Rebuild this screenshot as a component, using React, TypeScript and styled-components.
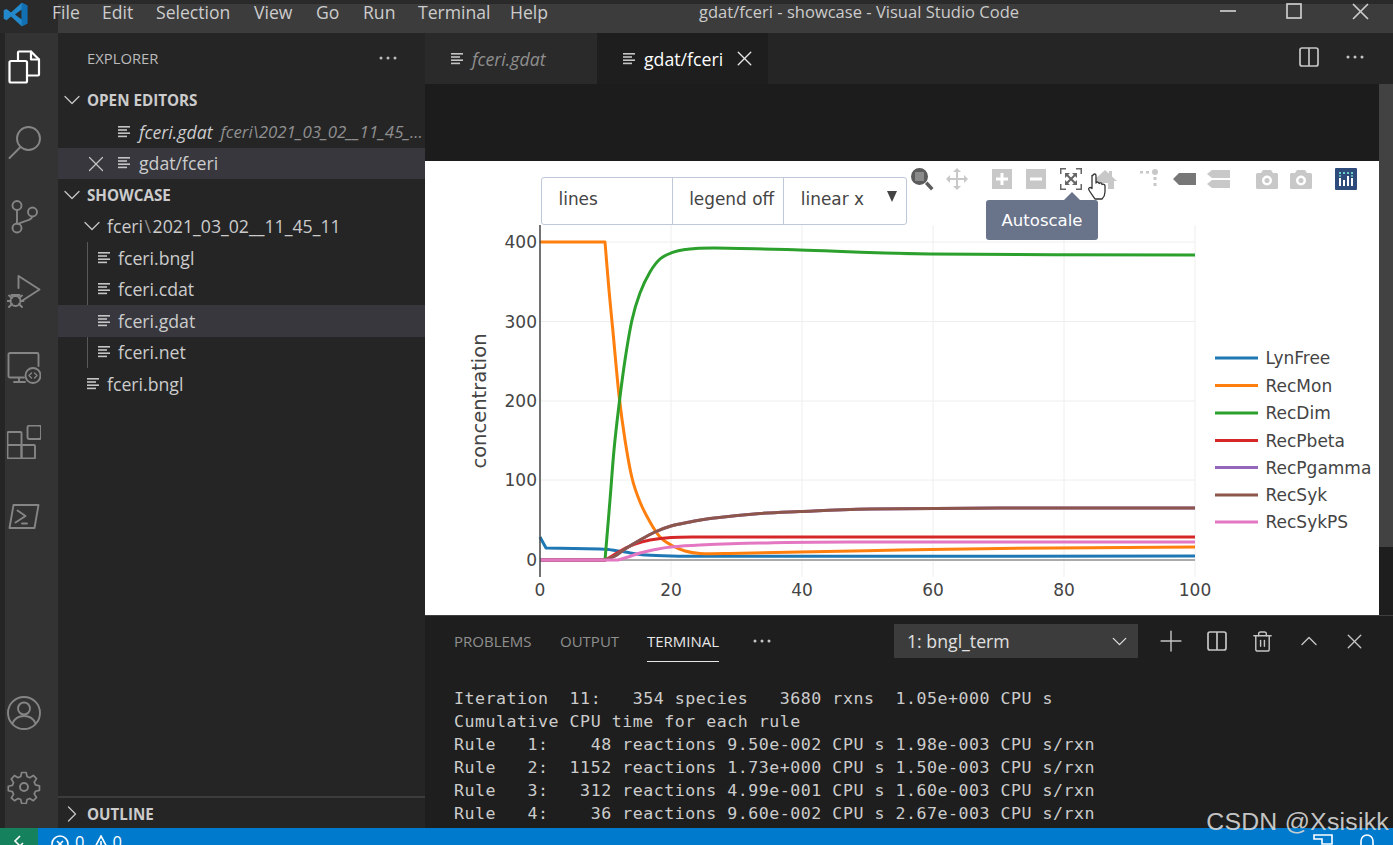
import React from 'react';
import styled, { createGlobalStyle } from 'styled-components';
import { ChevronDown, ChevronRight, ChevronUp, Plus, X, Trash2 } from 'lucide-react';

const UI = '"Open Sans", "Noto Sans", sans-serif';
const CHART = '"DejaVu Sans", sans-serif';

const Global = createGlobalStyle`
  html, body { margin: 0; padding: 0; height: 100%; overflow: hidden; background: #1e1e1e; }
  #root { height: 100%; }
  * { box-sizing: border-box; }
`;

const Page = styled.div`
  position: relative; width: 1393px; height: 845px; display: grid; grid-template-rows: 33px 1fr 17px;
  font-family: ${UI}; color: #cccccc; overflow: hidden;
`;
const TitleBar = styled.header`
  position: relative; display: flex; align-items: center; background: #3c3c3c;
  border-top: 4px solid #2a2a2a; padding-left: 52px; font-size: 17.6px; color: #cccccc;
`;
const Logo = styled.svg`position: absolute; left: 2px; top: -3px; width: 27px; height: 27px;`;
const LogoCell = styled.div`position: absolute; left: 0; top: -4px; width: 58px; height: 33px; background: #2a2a2a;`;
const MenuItem = styled.span<{ $w: number }>`position: relative; width: ${p => p.$w}px; white-space: nowrap; margin-top: -13px;`;
const WindowTitle = styled.span`position: absolute; left: 699px; top: -4px; white-space: nowrap; font-size: 16.5px; letter-spacing: 0.02px;`;
const WindowButtons = styled.div`position: absolute; right: 0; top: -4px; display: flex; width: 198px; height: 33px;`;
const WindowButton = styled.div`width: 66px; height: 22px; display: flex; align-items: center; justify-content: center; svg { display: block; }`;

const Main = styled.div`display: flex; min-height: 0;`;
const ActivityBar = styled.nav`
  width: 58px; background: #333333; border-left: 5px solid #252526; display: flex; flex-direction: column;
  align-items: flex-start; padding: 17px 0 24px 1.5px;
`;
const ActivityGroup = styled.div<{ $gap: number }>`display: flex; flex-direction: column; gap: ${p => p.$gap}px;`;
const Spacer = styled.div`flex: 1;`;
const ActivityIcon = styled.svg<{ $active?: boolean }>`
  display: block; width: 34px; height: 34px; fill: none; stroke: ${p => (p.$active ? '#ffffff' : '#858585')};
  stroke-width: ${p => (p.$active ? 2.2 : 1.9)}; stroke-linecap: round; stroke-linejoin: round;
`;

const Sidebar = styled.aside`width: 367px; background: #252526; display: flex; flex-direction: column;`;
const SideHead = styled.div`
  height: 51.5px; flex: none; display: flex; align-items: center; justify-content: space-between;
  padding: 0 27px 2px 29px; font-size: 14.8px; color: #bbbbbb;
`;
const Dots = styled.svg`display: block; width: 20px; height: 6px; fill: currentColor;`;
const Row = styled.div<{ $pad: number; $bg?: string }>`
  position: relative; height: 31.5px; display: flex; align-items: center; white-space: nowrap; overflow: hidden;
  padding-left: ${p => p.$pad}px; background: ${p => p.$bg || 'transparent'}; font-size: 17.7px;
`;
const SectionRow = styled(Row)`font-weight: 700; font-size: 15.2px; color: #cccccc;`;
const Chevron = styled.span<{ $w: number }>`display: flex; width: ${p => p.$w}px; flex: none; color: #c5c5c5; svg { display: block; margin-left: -7px; flex: none; }`;
const RowClose = styled.span`position: absolute; left: 24.5px; top: 3px; color: #c5c5c5; display: flex;`;
const FileGlyph = styled.svg<{ $mr: number }>`display: block; width: 14px; height: 14px; flex: none; margin-right: ${p => p.$mr}px; fill: #c5c5c5;`;
const Italic = styled.span`font-style: italic;`;
const Hint = styled.span`font-style: italic; color: #8f8f8f; font-size: 16.9px; margin-left: 8px;`;
const Thin = styled.span`color: #8f8f8f; margin: 0 1.5px;`;
const Guided = styled.div`
  position: relative;
  &::before { content: ''; position: absolute; left: 29px; top: 0; bottom: 0; width: 1px; background: #585858; }
`;
const SideFill = styled.div`flex: 1;`;
const OutlineRow = styled(SectionRow)`border-top: 2px solid #3c3c3c; height: 33px; margin-bottom: -1px;`;

const Workbench = styled.div`flex: 1; min-width: 0; display: flex; flex-direction: column;`;
const TabBar = styled.div`height: 51px; flex: none; background: #252526; display: flex; position: relative;`;
const Tab = styled.div<{ $active?: boolean; $w: number }>`
  width: ${p => p.$w}px; display: flex; align-items: center; padding-left: 25px; font-size: 17.7px;
  background: ${p => (p.$active ? '#1e1e1e' : '#2a2a2a')};
  color: ${p => (p.$active ? '#ffffff' : '#8f8f8f')};
`;
const TabActions = styled.div`position: absolute; right: 28px; top: 14px; display: flex; align-items: center; gap: 26px; color: #c5c5c5;`;
const TabClose = styled.span`display: flex; margin-left: 9px; color: #e6e6e6;`;
const LineIcon = styled.svg`display: block; fill: none; stroke: currentColor; stroke-width: 1.7;`;

const EditorRow = styled.div`flex: 1; min-height: 0; display: flex; background: #1e1e1e;`;
const EditorColumn = styled.div`flex: 1; min-width: 0; display: flex; flex-direction: column;`;
const EditorGap = styled.div`height: 77px; flex: none; background: #1c1c1c;`;
const Webview = styled.div`position: relative; flex: 1; background: #ffffff; min-height: 0;`;
const Scrollbar = styled.div`width: 14px; flex: none; background: #1e1e1e;`;
const ScrollThumb = styled.div`height: 463px; background: #424242;`;
const ChartSvg = styled.svg`display: block; width: 954px; height: 454px;`;
const AxisText = styled.text`font: 17px ${CHART}; fill: #444444;`;
const AxisTitle = styled.text`font: 19.5px ${CHART}; fill: #444444;`;

const Modebar = styled.div`position: absolute; left: 480px; top: 6px; display: flex; gap: 10.5px;`;
const ModeGroup = styled.div<{ $shift?: number }>`display: flex; margin-left: ${p => p.$shift || 0}px;`;
const ModeButton = styled.div`width: 34.5px; height: 24px; display: flex; align-items: center; justify-content: center; svg { display: block; width: 24px; height: 24px; }`;
const Menus = styled.div`
  position: absolute; left: 116px; top: 16px; height: 48px; width: 366px; display: flex;
  background: #fff; border: 1.5px solid #bec8d9; border-radius: 3px; font: 16.9px ${CHART}; color: #444;
`;
const MenuBtn = styled.div<{ $w: number; $last?: boolean }>`
  width: ${p => p.$w}px; padding: 0 0 4px 16.5px; display: flex; align-items: center; white-space: nowrap; position: relative;
  border-right: ${p => (p.$last ? 'none' : '1.5px solid #bec8d9')};
`;
const Arrow = styled.span`position: absolute; right: 9px; top: 13px; width: 0; height: 0; border-left: 5.5px solid transparent; border-right: 5.5px solid transparent; border-top: 11px solid #444;`;
const Tooltip = styled.div`
  position: absolute; left: 561px; top: 39px; width: 112px; height: 40px; border-radius: 3px; background: #69738a; color: #fff;
  font: 16.5px ${CHART}; display: flex; align-items: center; justify-content: center;
  &::before { content: ''; position: absolute; left: 78px; top: -8px; width: 0; height: 0;
    border-left: 8px solid transparent; border-right: 8px solid transparent; border-bottom: 8px solid #69738a; }
`;
const Cursor = styled.svg`position: absolute; left: 663px; top: 12px; width: 18px; height: 28px;`;

const Panel = styled.section`height: 213px; flex: none; background: #1e1e1e; border-top: 1px solid #3f3f3f; position: relative; display: flex; flex-direction: column;`;
const PanelHead = styled.div`height: 71px; flex: none; display: flex; align-items: flex-start; padding: 8px 0 0 29px; position: relative;`;
const PanelTab = styled.div<{ $active?: boolean; $w: number }>`
  width: ${p => p.$w}px; height: 38px; display: flex; align-items: center; font-size: 15px; white-space: nowrap;
  color: ${p => (p.$active ? '#e7e7e7' : '#8f8f8f')};
  span { display: block; height: 38px; line-height: 35px; border-bottom: ${p => (p.$active ? '1px solid #e7e7e7' : '1px solid transparent')}; }
`;
const PanelDots = styled.div`height: 34px; display: flex; align-items: center; color: #c5c5c5;`;
const TermSelect = styled.div`
  position: absolute; left: 469px; top: 8px; width: 244px; height: 34px; background: #3c3c3c; display: flex; align-items: center;
  justify-content: space-between; padding: 0 6.5px 0 13px; font-size: 17.7px; color: #e0e0e0;
`;
const PanelActions = styled.div`position: absolute; left: 722.5px; top: 13px; display: flex; align-items: center; color: #c5c5c5;`;
const PanelAction = styled.div`width: 46px; height: 24px; display: flex; justify-content: center; align-items: center; svg { flex: none; }`;
const Terminal = styled.pre`
  margin: 0; padding: 0 0 0 29px; font: 16.6px/23px "DejaVu Sans Mono", "Liberation Mono", monospace; letter-spacing: 0.52px;
  color: #cccccc; overflow: hidden; flex: 1;
`;

const StatusBar = styled.footer`
  position: relative; background: #007acc; display: flex; align-items: flex-start; overflow: hidden; color: #fff; font-size: 16.5px; line-height: 22px;
`;
const RemoteCell = styled.div`width: 38px; height: 17px; background: #16825d; display: flex; justify-content: center; padding-top: 7px;`;
const StatusItems = styled.div`display: flex; align-items: flex-start; gap: 6px; padding: 3px 0 0 13px;`;
const StatusRight = styled.div`position: absolute; left: 1312px; top: 6px; display: flex; gap: 25px;`;
const StatusGlyph = styled.svg<{ $top?: number; $left?: number; $right?: number }>`
  display: block; fill: none; stroke: #fff; stroke-width: 1.6; margin: ${p => p.$top ?? 4}px ${p => p.$right ?? 0}px 0 ${p => p.$left ?? 0}px;
`;
const Watermark = styled.div`
  position: absolute; right: 4px; top: 808px; font: 24.8px "Liberation Sans", sans-serif; color: #d6d6d6; opacity: 0.9; white-space: nowrap; letter-spacing: 0.25px;
`;

const FileIcon = ({ mr = 8 }: { mr?: number }) => (
  <FileGlyph $mr={mr} viewBox="0 0 14 14">
    <rect x="1" y="1" width="12" height="1.6" />
    <rect x="1" y="4.2" width="9" height="1.6" />
    <rect x="1" y="7.4" width="12" height="1.6" />
    <rect x="1" y="10.6" width="9" height="1.6" />
  </FileGlyph>
);
const ThreeDots = () => (
  <Dots viewBox="0 0 20 6"><circle cx="3" cy="3" r="1.5" /><circle cx="10" cy="3" r="1.5" /><circle cx="17" cy="3" r="1.5" /></Dots>
);

const ModeIcon: React.FC<{ c: string; children: React.ReactNode }> = ({ c, children }) => (
  <ModeButton><svg viewBox="0 0 24 24" fill={c} stroke="none">{children}</svg></ModeButton>
);

type Pt = [number, number];
const parse = (s: string): Pt[] => s.trim().split(/\s+/).map(t => t.split(',').map(Number) as Pt);
// A straight lead-in followed by a Catmull-Rom curve through the remaining points.
const toPath = (lead: string, curve: string) => {
  const l = parse(lead);
  const c = parse(curve);
  let d = l.map((p, i) => `${i ? 'L' : 'M'}${p[0]} ${p[1]}`).join(' ');
  for (let i = 0; i < c.length - 1; i++) {
    const p0 = c[i - 1] || c[i];
    const p1 = c[i];
    const p2 = c[i + 1];
    const p3 = c[i + 2] || p2;
    const k = 1 / 6;
    d += ` C${p1[0] + (p2[0] - p0[0]) * k} ${p1[1] + (p2[1] - p0[1]) * k} ${p2[0] - (p3[0] - p1[0]) * k} ${p2[1] - (p3[1] - p1[1]) * k} ${p2[0]} ${p2[1]}`;
  }
  return d;
};

const brown = '605,560 615,556 625,549 640,540 655,532 671,526 690,522 710,518.5 760,513.5 800,511.5 870,509 1000,508 1195,508';
const series = [
  { c: '#1f77b4', lead: '540,537 546,548', curve: '546,548 600,549 612,550 625,552 645,555 671,556 750,556.3 1195,556' },
  { c: '#ff7f0e', lead: '540,242 605,242', curve: '605,242 609,290 613,332 619,395 625,440 632,478 640,502 650,522 660,537 671,545 685,551 700,553.5 730,553.5 800,552 900,550 1000,548.5 1195,547' },
  { c: '#2ca02c', lead: '605,560', curve: '605,560 610,500 614,450 619,405 625,360 632,320 640,293 650,272 660,259 671,253 685,249.5 715,248 800,250 930,254 1195,255' },
  { c: '#d62728', lead: '540,560 605,560', curve: '605,560 612,556 622,550 635,544 650,540 671,537.5 700,537 800,537 1195,537' },
  { c: '#9467bd', lead: '540,560 605,560', curve: brown },
  { c: '#8c564b', lead: '540,560 605,560', curve: brown },
  { c: '#e377c2', lead: '540,560 618,560', curve: '618,560 628,557 640,553 655,549.5 671,547 700,545 760,543 850,542 1195,542' },
];
const legend = ['LynFree', 'RecMon', 'RecDim', 'RecPbeta', 'RecPgamma', 'RecSyk', 'RecSykPS'];
const legendY = [358, 385.5, 413, 440.5, 467.5, 495, 522];

const Chart = () => (
  <ChartSvg viewBox="425 161 954 454">
    {[671, 802, 933, 1064, 1195].map(x => <line key={x} x1={x} x2={x} y1={225} y2={577} stroke="#eeeeee" strokeWidth="1" />)}
    {[242, 321.5, 401, 480].map(y => <line key={y} x1={540} x2={1195} y1={y} y2={y} stroke="#eeeeee" strokeWidth="1" />)}
    <line x1={540} x2={1195} y1={560} y2={560} stroke="#aaaaaa" strokeWidth="2" />
    {series.map(s => <path key={s.c} d={toPath(s.lead, s.curve)} fill="none" stroke={s.c} strokeWidth="3" strokeLinejoin="round" />)}
    <line x1={540} x2={540} y1={225} y2={577} stroke="#444444" strokeWidth="1.5" />
    {[['400', 248], ['300', 327.5], ['200', 407], ['100', 486], ['0', 566]].map(([t, y]) => (
      <AxisText key={t} x={537} y={y} textAnchor="end">{t}</AxisText>
    ))}
    {[[0, 540], [20, 671], [40, 802], [60, 933], [80, 1064], [100, 1195]].map(([t, x]) => (
      <AxisText key={t} x={x} y={596} textAnchor="middle">{t}</AxisText>
    ))}
    <AxisTitle textAnchor="middle" transform="translate(486 401) rotate(-90)">concentration</AxisTitle>
    {legend.map((n, i) => (
      <g key={n}>
        <line x1={1215} x2={1258} y1={legendY[i]} y2={legendY[i]} stroke={series[i].c} strokeWidth="3" />
        <AxisText x={1265.5} y={legendY[i] + 6}>{n}</AxisText>
      </g>
    ))}
  </ChartSvg>
);

const ModeTools = () => (
  <Modebar>
    <ModeGroup>
      <ModeIcon c="#5c5c5c">
        <path fillRule="evenodd" d="M9.5 1a8.5 8.5 0 1 0 0 17 8.5 8.5 0 0 0 0-17zM5 5h9v9H5z" />
        <rect x="5" y="5" width="9" height="9" fill="#8a8a8a" />
        <path d="M15 17l2.500-2.500 6 6.500-2.500 2.500z" />
      </ModeIcon>
      <ModeIcon c="#c8c8c8">
        <path d="M12 1l4 4h-3v6h6V8l4 4-4 4v-3h-6v6h3l-4 4-4-4h3v-6H5v3l-4-4 4-4v3h6V5H8z" />
      </ModeIcon>
    </ModeGroup>
    <ModeGroup>
      <ModeIcon c="#c8c8c8">
        <path fillRule="evenodd" d="M2 2h20v20H2zM10.500 6v4.500H6v3h4.500V18h3v-4.500H18v-3h-4.500V6z" />
      </ModeIcon>
      <ModeIcon c="#c8c8c8">
        <path fillRule="evenodd" d="M2 2h20v20H2zM6 10.500v3h12v-3z" />
      </ModeIcon>
      <ModeIcon c="#666">
        <path d="M1 1h6v1.500H2.500V7H1zM17 1h6v6h-1.500V2.500H17zM1 17h1.500v4.500H7V23H1zM21.500 17H23v6h-6v-1.500h4.500z" />
        <path d="M6 6h5L9.200 7.800 12 10.500l2.800-2.700L13 6h5v5l-1.800-1.800L13.500 12l2.700 2.800L18 13v5h-5l1.800-1.800L12 13.500l-2.800 2.700L11 18H6v-5l1.800 1.800L10.500 12 7.800 9.200 6 11z" />
      </ModeIcon>
      <ModeIcon c="#c8c8c8">
        <path d="M12 3l4 3.600V4h3v5.400l5 4.600h-3v8h-6v-6H9v6H3v-8H0z" />
      </ModeIcon>
    </ModeGroup>
    <ModeGroup>
      <ModeIcon c="#c8c8c8">
        <circle cx="17" cy="5" r="3" /><rect x="2" y="4" width="3" height="2.500" /><rect x="8" y="4" width="3" height="2.500" />
        <rect x="15.500" y="10" width="3" height="3" /><rect x="15.500" y="16" width="3" height="3" />
      </ModeIcon>
      <ModeIcon c="#777">
        <path d="M0 12l6-6h17v12H6z" />
      </ModeIcon>
      <ModeIcon c="#c8c8c8">
        <path d="M0 7l5-4h18v8H5zM0 17l5-4h18v8H5z" />
      </ModeIcon>
    </ModeGroup>
    <ModeGroup $shift={2.5}>
      {[0, 1].map(i => (
        <ModeIcon key={i} c="#c8c8c8">
          <path fillRule="evenodd" d="M8 3h8l2 3h3.500a1.500 1.500 0 0 1 1.500 1.500v13a1.500 1.500 0 0 1-1.500 1.500h-19A1.500 1.500 0 0 1 1 20.500v-13A1.500 1.500 0 0 1 2.500 6H6zM12 8.500a5 5 0 1 0 0 10 5 5 0 0 0 0-10zM12 11a2.500 2.500 0 1 1 0 5 2.500 2.500 0 0 1 0-5z" />
        </ModeIcon>
      ))}
    </ModeGroup>
    <ModeGroup>
      <ModeIcon c="#2f4b7c">
        <rect x="1" y="1" width="22" height="22" rx="1" />
        <g fill="#ffffff"><rect x="5" y="11" width="2" height="8" /><rect x="9" y="13" width="2" height="6" /><rect x="13" y="9" width="2" height="10" /><rect x="17" y="11" width="2" height="8" /></g>
        <g fill="#69d2c4"><rect x="5" y="5" width="2" height="2" /><rect x="9" y="5" width="2" height="2" /><rect x="13" y="5" width="2" height="2" /><rect x="17" y="5" width="2" height="2" /><rect x="5" y="8.200" width="2" height="1.500" /><rect x="17" y="8.200" width="2" height="1.500" /></g>
      </ModeIcon>
    </ModeGroup>
  </Modebar>
);

export default function App() {
  return (
    <Page>
      <Global />
      <TitleBar>
        <LogoCell />
        <Logo viewBox="0 0 24 24">
          <path fill="#2489ca" fillRule="evenodd" d="M17.500 1.500 22.500 4v16l-5 2.500L8 13.800l-4 3.200L1.500 15.700V8.300L4 7l4 3.200zM17.500 7.500 11.500 12l6 4.500z" />
          <path fill="#1070b3" d="M17.500 1.500 22.500 4v16l-5 2.500z" />
        </Logo>
        {([['File', 50], ['Edit', 54], ['Selection', 98], ['View', 62], ['Go', 47], ['Run', 55], ['Terminal', 92], ['Help', 50]] as [string, number][]).map(([m, w]) => (
          <MenuItem key={m} $w={w}>{m}</MenuItem>
        ))}
        <WindowTitle>gdat/fceri - showcase - Visual Studio Code</WindowTitle>
        <WindowButtons>
          <WindowButton><LineIcon width="18" height="4" viewBox="0 0 18 4" stroke="#ccc"><path d="M1 2h16" /></LineIcon></WindowButton>
          <WindowButton><LineIcon width="16" height="16" viewBox="0 0 16 16"><rect x="1" y="1" width="14" height="14" /></LineIcon></WindowButton>
          <WindowButton><LineIcon width="17" height="17" viewBox="0 0 17 17"><path d="M1 1l15 15M16 1L1 16" /></LineIcon></WindowButton>
        </WindowButtons>
      </TitleBar>

      <Main>
        <ActivityBar>
          <ActivityGroup $gap={41}>
            <ActivityIcon viewBox="0 0 34 34" $active>
              <path d="M11 11V2.500a1 1 0 0 1 1-1h12l8 8v15a1 1 0 0 1-1 1H20" />
              <path d="M24 1.500V9.500h8" />
              <rect x="2.500" y="11" width="17.500" height="21.500" rx="1.500" />
            </ActivityIcon>
            <ActivityIcon viewBox="0 0 34 34">
              <circle cx="21.500" cy="13.500" r="11.500" />
              <path d="M13.500 22L2.500 33" />
            </ActivityIcon>
            <ActivityIcon viewBox="0 0 34 34">
              <circle cx="10" cy="5.500" r="4.500" /><circle cx="10" cy="28" r="4.500" /><circle cx="25.500" cy="12" r="4.500" />
              <path d="M10 10v13.500M25 17c-1 4-8 3.500-14 7" />
            </ActivityIcon>
            <ActivityIcon viewBox="0 0 34 34">
              <path d="M11.500 13V1l21 13.500-17 11" />
              <circle cx="8.500" cy="26" r="5" /><path d="M4.500 20l8 0M0.500 26h3M13.500 26h3M2 20.500l3 2.500M15 20.500l-3 2.500M2 32l3-3M15 32l-3-3" />
            </ActivityIcon>
            <ActivityIcon viewBox="0 0 34 34">
              <path d="M17 27.500H3a1.500 1.500 0 0 1-1.500-1.500V4.500A1.500 1.500 0 0 1 3 3h27a1.500 1.500 0 0 1 1.500 1.500V16" />
              <path d="M7 32h11M12 28v4" />
              <circle cx="26" cy="25.500" r="7.500" /><path d="M24.500 23l-2.500 2.500 2.500 2.500M27.500 23l2.500 2.500-2.500 2.500" strokeWidth="1.400" />
            </ActivityIcon>
            <ActivityIcon viewBox="0 0 34 34">
              <rect x="0.500" y="7" width="14" height="13" rx="1" /><rect x="0.500" y="20" width="14" height="13.500" rx="1" />
              <rect x="14.500" y="20" width="13.500" height="13.500" rx="1" /><rect x="20.500" y="0.500" width="13.500" height="13.500" rx="2" />
            </ActivityIcon>
            <ActivityIcon viewBox="0 0 34 34">
              <path d="M6.500 5h25l-4 23h-25z" /><path d="M10.500 10.500l8 5.500-10 6.500M15 23.500h5" />
            </ActivityIcon>
          </ActivityGroup>
          <Spacer />
          <ActivityGroup $gap={40}>
            <ActivityIcon viewBox="0 0 34 34">
              <circle cx="17" cy="17" r="16" /><circle cx="17" cy="12.500" r="6" /><path d="M5.500 27.500c2-5 6-7.500 11.500-7.500s9.500 2.500 11.500 7.500" />
            </ActivityIcon>
            <ActivityIcon viewBox="0 0 34 34">
              <circle cx="17" cy="17" r="4" />
              <path d="M14.500 1h5l1 4.500 3 1.300 4-2.500 3.500 3.500-2.500 4 1.300 3 4.500 1v5l-4.500 1-1.300 3 2.500 4-3.500 3.500-4-2.500-3 1.300-1 4.500h-5l-1-4.500-3-1.300-4 2.500L3 29.300l2.500-4-1.300-3-4.500-1v-5l4.500-1 1.300-3-2.500-4L6.500 4.300l4 2.500 3-1.300z" transform="translate(1.600 1.600) scale(0.9)" />
            </ActivityIcon>
          </ActivityGroup>
        </ActivityBar>

        <Sidebar>
          <SideHead>EXPLORER<ThreeDots /></SideHead>
          <SectionRow $pad={7}><Chevron $w={22}><ChevronDown size={28} strokeWidth={1.1} /></Chevron>OPEN EDITORS</SectionRow>
          <Row $pad={59}><FileIcon /><Italic>fceri.gdat</Italic><Hint>fceri\2021_03_02__11_45_...</Hint></Row>
          <Row $pad={59} $bg="#37373d">
            <RowClose><X size={26} strokeWidth={1.1} /></RowClose>
            <FileIcon />gdat/fceri
          </Row>
          <SectionRow $pad={7}><Chevron $w={22}><ChevronDown size={28} strokeWidth={1.1} /></Chevron>SHOWCASE</SectionRow>
          <Row $pad={27}><Chevron $w={22}><ChevronDown size={28} strokeWidth={1.1} /></Chevron>fceri<Thin>\</Thin>2021_03_02__11_45_11</Row>
          <Guided>
            <Row $pad={39}><FileIcon mr={7} />fceri.bngl</Row>
            <Row $pad={39}><FileIcon mr={7} />fceri.cdat</Row>
            <Row $pad={39} $bg="#37373d"><FileIcon mr={7} />fceri.gdat</Row>
            <Row $pad={39}><FileIcon mr={7} />fceri.net</Row>
          </Guided>
          <Row $pad={28}><FileIcon mr={7} />fceri.bngl</Row>
          <SideFill />
          <OutlineRow $pad={7}><Chevron $w={22}><ChevronRight size={28} strokeWidth={1.1} /></Chevron>OUTLINE</OutlineRow>
        </Sidebar>

        <Workbench>
          <TabBar>
            <Tab $w={172}><FileIcon /><Italic>fceri.gdat</Italic></Tab>
            <Tab $w={171} $active>
              <FileIcon />gdat/fceri
              <TabClose><X size={25} strokeWidth={1.3} /></TabClose>
            </Tab>
            <TabActions>
              <LineIcon width="20" height="20" viewBox="0 0 20 20"><rect x="1" y="1" width="18" height="18" rx="2" /><path d="M10 1v18" /></LineIcon>
              <ThreeDots />
            </TabActions>
          </TabBar>
          <EditorRow>
            <EditorColumn>
              <EditorGap />
              <Webview>
                <Chart />
                <ModeTools />
                <Menus>
                  <MenuBtn $w={131}>lines</MenuBtn>
                  <MenuBtn $w={112}>legend off</MenuBtn>
                  <MenuBtn $w={122} $last>linear x<Arrow /></MenuBtn>
                </Menus>
                <Tooltip>Autoscale</Tooltip>
                <Cursor viewBox="0 0 18 28">
                  <path d="M5 2.500c0-2 3-2 3 0V10c1-1.500 3-1.200 3 .5 1-1 3-.7 3 1 1-.7 3-.3 3 1.500v6c0 3-2 6-3 7H7c-1-1.500-5-7-6-9-1-2 1-3.500 3-1.500V2.500z" fill="#fff" stroke="#333" strokeWidth="1.300" strokeLinejoin="round" />
                </Cursor>
              </Webview>
            </EditorColumn>
            <Scrollbar><ScrollThumb /></Scrollbar>
          </EditorRow>
          <Panel>
            <PanelHead>
              <PanelTab $w={106}><span>PROBLEMS</span></PanelTab>
              <PanelTab $w={87}><span>OUTPUT</span></PanelTab>
              <PanelTab $w={105} $active><span>TERMINAL</span></PanelTab>
              <PanelDots><ThreeDots /></PanelDots>
              <TermSelect>1: bngl_term<ChevronDown size={25} strokeWidth={1.2} /></TermSelect>
              <PanelActions>
                <PanelAction><Plus size={34} strokeWidth={1} /></PanelAction>
                <PanelAction><LineIcon width="20" height="20" viewBox="0 0 20 20"><rect x="1" y="1" width="18" height="18" rx="2" /><path d="M10 1v18" /></LineIcon></PanelAction>
                <PanelAction><Trash2 size={23} strokeWidth={1.5} /></PanelAction>
                <PanelAction><ChevronUp size={28} strokeWidth={1.2} /></PanelAction>
                <PanelAction><X size={25} strokeWidth={1.3} /></PanelAction>
              </PanelActions>
            </PanelHead>
            <Terminal>{`Iteration  11:   354 species   3680 rxns  1.05e+000 CPU s
Cumulative CPU time for each rule
Rule   1:    48 reactions 9.50e-002 CPU s 1.98e-003 CPU s/rxn
Rule   2:  1152 reactions 1.73e+000 CPU s 1.50e-003 CPU s/rxn
Rule   3:   312 reactions 4.99e-001 CPU s 1.60e-003 CPU s/rxn
Rule   4:    36 reactions 9.60e-002 CPU s 2.67e-003 CPU s/rxn`}</Terminal>
          </Panel>
        </Workbench>
      </Main>

      <StatusBar>
        <RemoteCell>
          <StatusGlyph width="12" height="14" viewBox="0 0 12 14" $top={0}><path d="M7 1L2 6l5 5M5 13l5-5" /></StatusGlyph>
        </RemoteCell>
        <StatusItems>
          <StatusGlyph width="18" height="18" viewBox="0 0 18 18"><circle cx="9" cy="9" r="8" /><path d="M6 6l6 6M12 6l-6 6" /></StatusGlyph>
          <span>0</span>
          <StatusGlyph width="18" height="18" viewBox="0 0 18 18" $left={2} $right={-4}><path d="M9 1l8 15H1zM9 6v6" /></StatusGlyph>
          <span>0</span>
        </StatusItems>
        <StatusRight>
          <StatusGlyph width="22" height="20" viewBox="0 0 22 20" $top={0}><path d="M2 1h18v9H10v-5H2z" /></StatusGlyph>
          <StatusGlyph width="16" height="20" viewBox="0 0 16 20" $top={0}><path d="M2 16V7a6 6 0 0 1 12 0v9" /></StatusGlyph>
        </StatusRight>
      </StatusBar>
      <Watermark>CSDN @Xsisikk</Watermark>
    </Page>
  );
}
